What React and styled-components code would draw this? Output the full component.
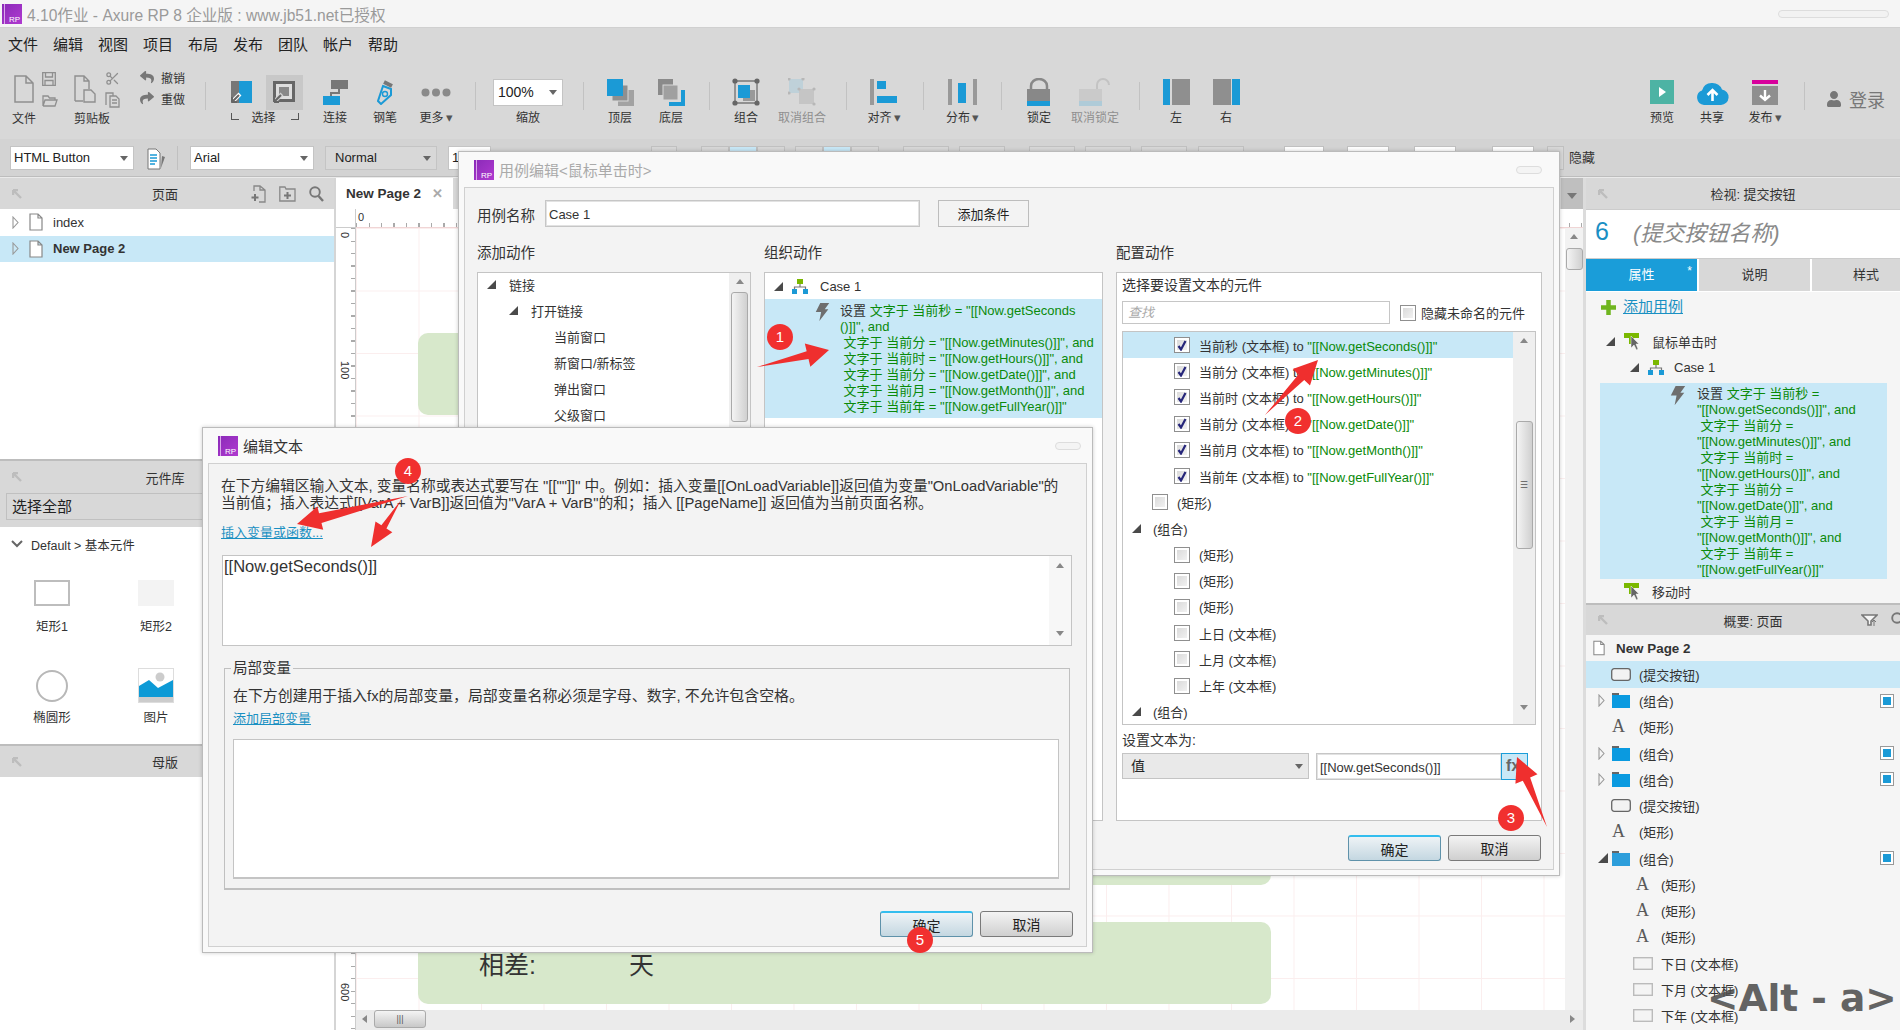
import React from "react";
import styled, { createGlobalStyle } from "styled-components";
import { FaReply, FaShare, FaUser } from "react-icons/fa";
import { Scissors } from "lucide-react";

const sans = '"Liberation Sans","Noto Sans CJK SC",sans-serif';
const BLUE = "#1b9ad6";

const Global = createGlobalStyle`
  html, body { margin: 0; padding: 0; width: 1900px; height: 1030px; overflow: hidden; }
  body { font-family: ${sans}; font-size: 13px; color: #333; background: #fff; }
  * { box-sizing: border-box; }
`;

const Page = styled.div`position: relative; width: 1900px; height: 1030px; overflow: hidden; display: flex; flex-direction: column;`;

const TitleBar = styled.header`height: 28px; background: #f5f5f5; display: flex; align-items: center; padding: 0 11px 0 2px; border-bottom: 1px solid #d0d0d0;`;
const TitleText = styled.span`margin-left: 5px; font-size: 15.6px; color: #9a9a9a; flex: 1;`;
const WinPill = styled.span`width: ${p => p.$w}px; height: ${p => p.$h}px; border: 1px solid #ddd; border-radius: 5px; background: #f2f2f2;`;

const MenuBar = styled.nav`height: 30px; background: #d8d8d8; display: flex; align-items: center; gap: 15px; padding-left: 8px;`;
const MenuItem = styled.span`font-size: 15px; color: #222; width: 30px; white-space: nowrap;`;

const ToolBar = styled.div`height: 81px; background: #d8d8d8; display: flex; align-items: flex-start; padding-top: 17px;`;
const ToolWrap = styled.div`width: ${p => p.$w}px; flex: none; display: flex; flex-direction: column; align-items: center;`;
const ToolIcon = styled.div`height: 34px; display: flex; align-items: center; justify-content: center;`;
const ToolLabel = styled.span`height: 16px; line-height: 16px; margin-top: 1px; font-size: 12px; white-space: nowrap; color: ${p => (p.$dim ? "#8f8f8f" : "#333")};`;
const Caret = styled.i`font-style: normal; font-size: 13px; line-height: 12px; color: #555; margin-left: 2px;`;
const Sep = styled.span`flex: none; width: 1px; height: 28px; margin: 7px 0 0 ${p => p.$ml || 0}px; background: #c2c2c2;`;
const Grow = styled.div`flex: 1;`;
const EndGap = styled.div`flex: 0 0 15px;`;

const FileGroup = styled.div`width: 205px; flex: none; display: flex; padding-left: 12px;`;
const Stack = styled.div`display: flex; flex-direction: column; gap: ${p => p.$gap || 6}px; margin: ${p => p.$m || "0"};`;
const BigFile = styled.div`display: flex; flex-direction: column; align-items: ${p => p.$align || "center"}; width: ${p => p.$w}px; margin-left: ${p => p.$ml || 0}px;`;
const FileLabel = styled.span`margin-top: 6px; font-size: 12px; white-space: nowrap;`;
const UndoRow = styled.div`display: flex; align-items: center; gap: 7px; font-size: 12px; height: 14px; color: #333;`;

const SelectGroup = styled.div`width: 104px; flex: none; display: flex; flex-direction: column; padding-left: 25px;`;
const SelectIcons = styled.div`display: flex; height: 34px; align-items: center; gap: 13px;`;
const SelectHi = styled.div`width: 37px; height: 35px; background: #c8c8c8; display: flex; align-items: center; justify-content: center;`;
const SelectLabel = styled.div`width: 68px; height: 16px; display: flex; justify-content: space-between; margin-top: 1px; font-size: 12px; line-height: 16px;`;
const SelectText = styled.span`margin-left: -3px;`;
const Bracket = styled.i`width: 8px; height: 7px; margin-top: 3px; border-bottom: 1px solid #555; ${p => (p.$r ? "border-right" : "border-left")}: 1px solid #555;`;

const LoginBox = styled.div`margin: 11px 0 0 21px; display: flex; align-items: center; gap: 7px; font-size: 18px; color: #777;`;
const ZoomBox = styled.div`
  width: 70px; height: 27px; background: #fff; border: 1px solid #c4c4c4; font-size: 14px; line-height: 25px; padding-left: 4px; position: relative; color: #222;
  &::after { content: ""; position: absolute; right: 5px; top: 10px; border: 4.5px solid transparent; border-top: 5px solid #666; }
`;

const FormatBar = styled.div`height: 38px; background: #d3d3d3; display: flex; align-items: flex-start; padding: 7px 0 0 10px; border-bottom: 1px solid #bdbdbd;`;
const SelectBox = styled.div`
  flex: none; width: ${p => p.$w}px; height: 24px; margin-left: ${p => p.$ml || 0}px; background: ${p => p.$bg || "#fff"};
  border: 1px solid #c4c4c4; font-size: 13px; line-height: 22px; padding-left: ${p => p.$pl || 3}px; position: relative; color: #222;
  &::after { content: ""; position: absolute; right: 5px; top: 9px; border: 4.5px solid transparent; border-top: 5px solid #666; }
`;
const Peek = styled.span`flex: none; width: ${p => p.$w}px; height: 24px; margin-left: ${p => p.$ml}px; background: ${p => p.$bg || "#d8d8d8"}; border: 1px solid #c0c0c0;`;
const PeekLabel = styled.span`margin-left: 5px; font-size: 13px; line-height: 24px; color: #333; white-space: nowrap;`;
const FmtIcon = styled.span`margin: 2px 0 0 13px;`;
const FmtSep = styled.span`width: 1px; height: 24px; background: #c0c0c0; margin: 0 12px 0 11px;`;

const Workspace = styled.div`flex: 1; display: flex; min-height: 0; border-top: 1px solid #eaeaea;`;

const LeftPanel = styled.aside`flex: none; display: flex; flex-direction: column; background: #fff; border-right: 2px solid #d5d5d5; width: 336px;`;
const PanelHead = styled.div`
  height: ${p => p.$h || 31}px; flex: none; background: #d8d8d8; display: flex; align-items: center; padding: 0 10px 0 12px; position: relative; font-size: 13px;
`;
const HeadTitle = styled.span`position: absolute; left: 0; right: ${p => p.$r || 4}px; text-align: center; pointer-events: none;`;
const HeadIcons = styled.div`margin-left: auto; display: flex; gap: 13px; align-items: center; margin-right: ${p => p.$mr || 0}px;`;
const PageRow = styled.div`
  height: 26.5px; display: flex; align-items: center; padding-left: 12px; gap: 10px; font-size: 13px; color: #333;
  background: ${p => (p.$on ? "#c8e8f7" : "transparent")}; font-weight: ${p => (p.$on ? 700 : 400)};
`;
const PagesBody = styled.div`height: 252px; flex: none; border-bottom: 2px solid #bdbdbd;`;
const LibFilter = styled.div`background: #d8d8d8; padding: 0 0 8px 6px; height: 34px; flex: none;`;
const LibFilterBox = styled.div`height: 27px; border: 1px solid #c0c0c0; border-right: none; padding-left: 5px; line-height: 25px; font-size: 15px; color: #222;`;
const LibGroup = styled.div`height: 34px; display: flex; align-items: center; padding-left: 11px; gap: 8px; font-size: 12.5px;`;
const LibGrid = styled.div`display: grid; grid-template-columns: 104px 104px; grid-template-rows: 54px 58px; row-gap: 34px; padding: 19px 0 0 0; height: 185px; flex: none; border-bottom: 2px solid #bdbdbd;`;
const Widget = styled.div`display: flex; flex-direction: column; align-items: center; gap: ${p => p.$gap}px; font-size: 12.5px; line-height: 14px;`;
const RectW = styled.div`width: 36px; height: 26px; border: 2px solid ${p => (p.$fill ? "#f3f3f3" : "#bdbdbd")}; background: ${p => (p.$fill ? "#f3f3f3" : "#fff")};`;
const CircleW = styled.div`width: 32px; height: 32px; margin: 2px 0 1px; border-radius: 50%; border: 2px solid #b8b8b8;`;

const CanvasPane = styled.main`flex: 1; min-width: 0; display: flex; flex-direction: column; border-right: 3px solid #dcdcdc;`;
const TabRow = styled.div`height: 31px; flex: none; background: #d8d8d8; display: flex;`;
const Tab = styled.div`width: 117px; background: #fff; display: flex; align-items: center; padding-left: 10px; font-weight: 700; font-size: 13.5px; color: #333; gap: 11px;`;
const TabClose = styled.span`color: #aaa; font-size: 13px; font-weight: 700;`;
const TabScroll = styled.div`margin-left: auto; width: 22px; background: #bfbfbf; position: relative; &::after { content: ""; position: absolute; left: 6px; top: 15px; border: 5px solid transparent; border-top: 6px solid #777; }`;
const CanvasGrid = styled.div`flex: 1; min-height: 0; display: grid; grid-template-columns: 20px 1fr 18px; grid-template-rows: 19px 1fr 20px;`;
const RulerCorner = styled.div`background: #fff; border-right: 1px solid #ccc; border-bottom: 1px solid #ccc;`;
const RulerH = styled.div`
  position: relative; background: #fff; border-bottom: 1px solid #f0d5d5; grid-column: 2 / 4;
  background-image: repeating-linear-gradient(90deg, #aaa 0 1px, transparent 1px 12.5px);
  background-size: 100% 4px; background-position: 0 bottom; background-repeat: no-repeat;
`;
const RulerV = styled.div`
  position: relative; background: #fff; border-right: 1px solid #ccc;
  background-image: repeating-linear-gradient(180deg, #aaa 0 1px, transparent 1px 12.5px);
  background-size: 4px 100%; background-position: right 0; background-repeat: no-repeat; grid-row: 2 / 4;
`;
const RulerNum = styled.span`position: absolute; left: 2px; top: 2px; font-size: 11px; color: #333;`;
const RulerNumV = styled.span`position: absolute; left: 3px; top: ${p => p.$y}px; font-size: 11px; writing-mode: vertical-rl; color: #333;`;
const Canvas = styled.div`
  position: relative; overflow: hidden; background-color: #fff;
  background-image: linear-gradient(90deg, #fbeeee 1px, transparent 1px), linear-gradient(180deg, #fbeeee 1px, transparent 1px);
  background-size: 62.5px 62.5px;
`;
const GreenBox = styled.div`position: absolute; left: 62px; width: 853px; top: ${p => p.$top}px; height: ${p => p.$h}px; background: #d7e8cb; border-radius: 10px;`;
const GreenText = styled.span`position: absolute; left: ${p => p.$x}px; top: 26px; font-size: 25px; line-height: 34px; color: #333;`;
const VScroll = styled.div`grid-row: 2; grid-column: 3; background: #f2f2f2; display: flex; flex-direction: column; align-items: center; padding-top: 6px; gap: 9px;`;
const ArrowUp = styled.i`width: 0; height: 0; border: 4px solid transparent; border-bottom: 5px solid #888; border-top: none;`;
const ArrowDown = styled.i`width: 0; height: 0; border: 4px solid transparent; border-top: 5px solid #888; border-bottom: none;`;
const ArrowLeft = styled.i`width: 0; height: 0; border: 4px solid transparent; border-right: 5px solid #888; border-left: none;`;
const ArrowRight = styled.i`width: 0; height: 0; border: 4px solid transparent; border-left: 5px solid #888; border-right: none;`;
const Thumb = styled.div`
  width: ${p => p.$w}px; height: ${p => p.$h}px; flex: none; border: 1px solid #aaa; border-radius: 3px;
  background: ${p => (p.$horiz ? "linear-gradient(180deg,#f4f4f4,#c8c8c8)" : "linear-gradient(90deg,#f4f4f4,#d0d0d0)")};
  display: flex; align-items: center; justify-content: center; font-size: 9px; color: #555;
`;
const HScroll = styled.div`background: #ebebeb; display: flex; align-items: center; padding: 0 8px 2px 6px; gap: 7px; grid-column: 2 / 4;`;

const RightPanel = styled.aside`width: 314px; flex: none; background: #f5f5f5; display: flex; flex-direction: column; overflow: hidden;`;
const NameRow = styled.div`height: 50px; flex: none; background: #fff; display: flex; align-items: center; padding: 0 0 6px 9px; border-top: 1px solid #ccc; border-bottom: 1px solid #ccc;`;
const NameNum = styled.span`font-size: 25px; color: #1a8fc4; width: 38px;`;
const NamePh = styled.span`font-size: 22px; font-style: italic; color: #8a8a8a;`;
const Tabs = styled.div`height: 33px; flex: none; display: flex; gap: 2px; background: #fff;`;
const TabBtn = styled.div`
  width: ${p => p.$w}px; flex: none; height: 32px; line-height: 32px; text-align: center; font-size: 13px; position: relative;
  background: ${p => (p.$on ? "#1a9dd9" : "#d8d8d8")}; color: ${p => (p.$on ? "#fff" : "#333")};
`;
const Star = styled.i`position: absolute; right: 5px; top: -4px; font-style: normal; font-size: 12px; color: #fff;`;
const AddCase = styled.div`height: 36px; flex: none; display: flex; align-items: center; padding: 0 0 6px 15px; gap: 7px;`;
const LinkText = styled.a`color: #1a90c2; text-decoration: underline; font-size: ${p => p.$s || 13}px; line-height: 16px; display: block; white-space: nowrap; margin-top: ${p => p.$mt || 0}px;`;
const TreeRow = styled.div`height: ${p => p.$h || 26}px; flex: none; display: flex; align-items: center; padding-left: ${p => p.$pl}px; font-size: 13px; color: #333;`;
const TriBox = styled.span`width: ${p => p.$w || 18}px; flex: none; display: flex; align-items: center;`;
const IconBox = styled.span`width: ${p => p.$w}px; flex: none; display: flex; align-items: center;`;
const ActionBlock = styled.div`
  margin: ${p => p.$m}; background: #c8e8f7; display: flex; align-items: flex-start; padding: ${p => p.$pad}; flex: none;
`;
const ActionLines = styled.div`margin-left: ${p => p.$ml}px; font-size: 13px; line-height: 16px; color: #0a8a0a; white-space: pre;`;
const Dark = styled.span`color: #333;`;
const OverviewHead = styled(PanelHead)`border-top: 2px solid #bdbdbd; height: 32px;`;
const OvRow = styled.div`
  height: 26.25px; flex: none; display: flex; align-items: center; padding-left: ${p => p.$pl}px; font-size: ${p => (p.$b ? 13.4 : 13)}px; color: #333; position: relative;
  background: ${p => (p.$on ? "#c8e8f7" : "transparent")}; font-weight: ${p => (p.$b ? 700 : 400)};
`;
const OvBadge = styled.span`margin-left: auto; margin-right: 6px; width: 14px; height: 14px; border: 1px solid #999; background: #fff; display: flex; align-items: center; justify-content: center; &::after { content: ""; width: 8px; height: 8px; background: ${BLUE}; }`;
const AIcon = styled.span`font-family: "Liberation Serif", serif; font-size: 18px; color: #5a5a5a; width: ${p => p.$w}px; flex: none;`;

const Dialog = styled.section`
  position: absolute; left: ${p => p.$x}px; top: ${p => p.$y}px; width: ${p => p.$w}px; height: ${p => p.$h}px;
  background: #f9f9f9; border: 1px solid #bbb; box-shadow: 0 0 4px rgba(0,0,0,.2); display: flex; flex-direction: column; padding: 0 5px 5px;
`;
const DlgTitle = styled.div`height: 35px; flex: none; display: flex; align-items: center; padding-left: 10px; gap: 5px; font-size: 15px; color: ${p => (p.$dim ? "#aaa" : "#333")};`;
const DlgPill = styled.span`margin-left: auto; margin-right: ${p => p.$mr}px; width: 26px; height: 8px; border: 1px solid #ddd; border-radius: 4px; background: #f4f4f4;`;
const DlgBody = styled.div`flex: 1; min-height: 0; background: #f3f3f3; border: 1px solid #d0d0d0; display: flex; flex-direction: column; padding: ${p => p.$pad};`;

const NameBar = styled.div`display: flex; align-items: center; height: 27px; font-size: 14.5px; flex: none;`;
const NameLabel = styled.label`width: 68px; flex: none; white-space: nowrap; padding-top: 2px;`;
const TextBox = styled.div`
  width: ${p => p.$w}px; height: ${p => p.$h || 27}px; flex: none; background: #fff; border: 1px solid #c6c6c6; box-shadow: inset 0 0 0 1px #e2e2e2;
  font-size: 13px; line-height: ${p => (p.$h || 27)}px; padding-left: 3px; color: #333;
`;
const FlatBtn = styled.button`
  width: 91px; height: 27px; margin-left: 18px; background: #f3f3f3; border: 1px solid #bdbdbd; font-family: ${sans}; font-size: 13px; color: #222; padding: 0;
`;
const Columns = styled.div`display: grid; grid-template-columns: 274px 339px 426px; column-gap: 13px; margin-top: 17px; flex: 1; min-height: 0;`;
const Column = styled.div`display: flex; flex-direction: column; min-height: 0;`;
const ColTitle = styled.div`font-size: 14.5px; height: 19px; line-height: 19px; margin-bottom: 9px; flex: none;`;
const ColBox = styled.div`flex: 1; min-height: 0; background: #fff; border: 1px solid #c4c4c4; display: flex; position: relative; overflow: hidden;`;
const ColList = styled.div`flex: 1; min-width: 0; display: flex; flex-direction: column; margin-top: ${p => p.$mt || 0}px;`;
const ScrollTrack = styled.div`width: ${p => p.$w || 21}px; flex: none; background: #efefef; display: flex; flex-direction: column; align-items: center; padding-top: 6px; gap: ${p => p.$gap || 8}px;`;
const ActionPad = styled.div`flex: 1; display: flex; flex-direction: column; padding: 0 5px 0;`;
const PickTitle = styled.div`font-size: 14px; color: #333; line-height: 16px; margin-top: 4px; white-space: nowrap;`;
const SearchRow = styled.div`display: flex; align-items: center; margin-top: 8px; flex: none;`;
const SearchBox = styled.div`width: 268px; height: 23px; background: #fff; border: 1px solid #c6c6c6; font-size: 13px; font-style: italic; color: #aaa; line-height: 21px; padding-left: 5px;`;
const Check = styled.span`
  width: 16px; height: 16px; flex: none; border: 1px solid #8f8f8f; background: linear-gradient(135deg,#d6d6d6,#f6f6f6);
  box-shadow: inset 0 0 0 2px #fff; display: flex; align-items: center; justify-content: center;
`;
const SearchCheck = styled.span`margin-left: 10px; display: flex; align-items: center; gap: 5px; font-size: 13px; white-space: nowrap;`;
const TargetBox = styled.div`height: 394px; margin-top: 7px; flex: none; background: #fff; border: 1px solid #c4c4c4; display: flex; overflow: hidden;`;
const TargetRow = styled.div`
  height: 26.2px; flex: none; display: flex; align-items: center; padding-left: ${p => p.$pl}px; font-size: 13px; gap: ${p => p.$gap || 9}px; white-space: nowrap;
  background: ${p => (p.$on ? "#c8e8f7" : "transparent")}; color: #333;
`;
const Green = styled.span`color: #0a8a0a;`;
const ValLabel = styled.div`font-size: 14px; margin-top: 7px; line-height: 16px; flex: none;`;
const ValRow = styled.div`display: flex; margin-top: 5px; flex: none;`;
const ValSelect = styled(SelectBox)`height: 26px; background: #e9e9e9; font-size: 14px; line-height: 24px; padding-left: 8px; &::after { top: 10px; }`;
const ValInput = styled(TextBox)`margin-left: 7px; height: 27px; line-height: 27px; border-right: none;`;
const FxBtn = styled.div`width: 27px; height: 27px; background: #c8e8f7; border: 1px solid #1a9dd9; color: #666; font-weight: 700; font-size: 16px; line-height: 24px; padding-left: 4px;`;
const BtnRow = styled.div`display: flex; justify-content: flex-end; gap: 7px; margin-top: ${p => p.$mt}px; flex: none;`;
const DlgBtn = styled.button`
  width: 93px; height: 26px; border-radius: 3px; padding: 0; font-family: ${sans}; font-size: 14px; color: #222;
  border: 1px solid ${p => (p.$primary ? "#5f92aa" : "#7a7a7a")}; ${p => (p.$primary ? "border-top: 2px solid #33bdee;" : "")}
  background: ${p => (p.$primary ? "linear-gradient(180deg,#eef3f6,#c4d7e1)" : "linear-gradient(180deg,#f3f3f3,#cfcfcf)")};
`;

const HelpText = styled.p`margin: 0; font-size: 14.75px; line-height: 17px; color: #333; white-space: nowrap;`;
const HelpLink = styled.div`margin-top: 13px; height: 16px;`;
const EditArea = styled.div`width: 850px; height: 91px; margin: 14px 0 0 1px; background: #fff; border: 1px solid #c4c4c4; display: flex; flex: none;`;
const EditText = styled.div`flex: 1; font-size: 16.5px; line-height: 20px; padding: 0 1px; color: #333;`;
const EditScroll = styled.div`width: 22px; background: #f7f7f7; display: flex; flex-direction: column; align-items: center; justify-content: space-between; padding: 7px 0 9px;`;
const GroupBox = styled.fieldset`margin: 13px 0 0 3px; padding: 11px 9px 9px 8px; width: 846px; height: 231px; flex: none; border: 1px solid #c0c0c0; border-width: 1px 1px 2px 1px; min-width: 0;`;
const GroupLegend = styled.legend`padding: 0 2px; margin-left: -2px; font-size: 14.5px; height: 18px; line-height: 18px; color: #333;`;
const GroupNote = styled.div`font-size: 14.9px; color: #333; line-height: 16px; white-space: nowrap;`;
const VarBox = styled.div`width: 826px; height: 140px; margin-top: 12px; background: #fff; border: 1px solid #c4c4c4; border-bottom: 2px solid #c4c4c4;`;

const Overlay = styled.svg`position: absolute; left: 0; top: 0; width: 1900px; height: 1030px; pointer-events: none;`;
const Marker = styled.span`
  position: absolute; left: ${p => p.$x - 13}px; top: ${p => p.$y - 13}px; width: 26px; height: 26px; border-radius: 50%; background: #f1302f;
  color: #fff; font-size: 15px; line-height: 26px; text-align: center; font-family: "Liberation Sans", sans-serif;
`;
const AltHint = styled.div`position: absolute; left: 1707px; top: 974px; font-family: "DejaVu Sans", sans-serif; font-weight: 700; font-size: 37.5px; line-height: 48px; color: #4a4a4a; opacity: .85; white-space: nowrap;`;

/* ---------- drawn icons ---------- */
const Logo = ({ s = 20 }) => (
  <svg width={s} height={s} viewBox="0 0 20 20">
    <defs><linearGradient id="lg" x1="0" y1="0" x2="1" y2="1"><stop offset="0" stopColor="#8a2ab8" /><stop offset="1" stopColor="#b03ad0" /></linearGradient></defs>
    <rect width="20" height="20" fill="url(#lg)" />
    <rect x="2" width="1" height="20" fill="#d9a6ea" />
    <text x="7" y="18" fontSize="8" fill="#fff" fontFamily="Liberation Sans">RP</text>
  </svg>
);
const PageIcon = ({ w = 14, h = 18 }) => (
  <svg width={w} height={h} viewBox="0 0 14 18"><path d="M1 1H9L13 5V17H1Z M9 1V5H13" fill="#fff" stroke="#888" strokeWidth="1.2" /></svg>
);
const TriDown = ({ s = 9 }) => <svg width={s} height={s} viewBox="0 0 9 9"><polygon points="0,9 9,9 9,0" fill="#4a4a4a" /></svg>;
const TriRight = () => <svg width="7" height="13" viewBox="0 0 7 13"><polygon points="1,1 6,6.5 1,12" fill="none" stroke="#999" strokeWidth="1.1" /></svg>;
const Collapse = () => <svg width="10" height="10" viewBox="0 0 10 10"><path d="M1 1H6M1 1V6M1 1L9 9" stroke="#bdbdbd" strokeWidth="2.4" fill="none" /></svg>;
const Bolt = ({ s = 18 }) => <svg width={s} height={s * 1.2} viewBox="0 0 15 20"><polygon points="5,0 15,0 10,7 14,7 4,20 6,10 0,10" fill="#6e6e6e" /></svg>;
const CaseIcon = () => (
  <svg width="16" height="15" viewBox="0 0 16 15">
    <rect x="5" y="0" width="6" height="5" fill="#7ab800" />
    <path d="M8 5V8M2.5 10V8H13.5V10" stroke="#777" strokeWidth="1.2" fill="none" />
    <rect x="0" y="10" width="5" height="5" fill={BLUE} /><rect x="11" y="10" width="5" height="5" fill={BLUE} />
  </svg>
);
const ClickIcon = () => (
  <svg width="16" height="17" viewBox="0 0 16 17">
    <rect x="0" y="0" width="15" height="5" fill="#7ab800" /><rect x="5" y="0" width="5" height="11" fill="#7ab800" />
    <path d="M7 3V15L10 12L12.5 17L14 16L12 11H15Z" fill="#666" stroke="#fff" strokeWidth=".5" />
  </svg>
);
const Cursor = () => <path d="M8 14L1 21M1 21V16M1 21H6" stroke="#666" strokeWidth="2" fill="none" />;
const I = {
  New: () => <svg width="20" height="28" viewBox="0 0 20 28"><path d="M1 1H12L19 8V27H1Z M12 1V8H19" fill="none" stroke="#8f8f8f" strokeWidth="1.5" /></svg>,
  Save: () => <svg width="14" height="14" viewBox="0 0 14 14"><path d="M.7.7H13.3V13.3H.7Z M3.5.7V5H10.5V.7 M3 13V8.5H11V13" fill="none" stroke="#8f8f8f" strokeWidth="1.3" /></svg>,
  Open: () => <svg width="16" height="12" viewBox="0 0 16 12"><path d="M1 11V1H6L7.5 3H13V5 M1 11H13L15 5H3L1 11" fill="none" stroke="#8f8f8f" strokeWidth="1.3" /></svg>,
  Paste: () => <svg width="22" height="28" viewBox="0 0 22 28"><path d="M1 26V1H10L15 6V14 M10 1V6H15 M1 26H9 M10 15H17L21 19V27H10Z" fill="none" stroke="#8f8f8f" strokeWidth="1.4" /></svg>,
  Copy: () => <svg width="15" height="16" viewBox="0 0 15 16"><path d="M1 13V1H8V4 M5 4H11L14 7V15H5Z M7 8H12M7 11H12" fill="none" stroke="#8f8f8f" strokeWidth="1.3" /></svg>,
  Sel1: () => <svg width="22" height="23" viewBox="0 0 22 23"><rect width="8" height="22" fill="#777" /><rect x="8" width="13" height="22" fill={BLUE} /><path d="M9 13L2 20" stroke="#fff" strokeWidth="4" /><Cursor /></svg>,
  Sel2: () => <svg width="23" height="23" viewBox="0 0 23 23"><rect x="1.5" y="1.5" width="19" height="18" fill="#dedede" stroke="#666" strokeWidth="3" /><rect x="6" y="6" width="10" height="9" fill="#888" /><path d="M9 13L2 20" stroke="#d0d0d0" strokeWidth="4" /><Cursor /></svg>,
  Conn: () => <svg width="25" height="25" viewBox="0 0 25 25"><rect x="8" width="17" height="9" fill="#777" /><rect y="16" width="17" height="9" fill={BLUE} /><path d="M16 9V13H8V16" stroke="#777" strokeWidth="2" fill="none" /></svg>,
  Pen: () => <svg width="17" height="25" viewBox="0 0 17 25"><path d="M6 6L14 9L14 15L4 24L1 21Z" fill="none" stroke={BLUE} strokeWidth="2" /><circle cx="8" cy="14" r="2.5" fill="none" stroke={BLUE} strokeWidth="1.4" /><path d="M7 2L15 6" stroke="#777" strokeWidth="4" /></svg>,
  More: () => <svg width="30" height="9" viewBox="0 0 30 9"><circle cx="4.5" cy="4.5" r="4" fill="#8a8a8a" /><circle cx="15" cy="4.5" r="4" fill="#8a8a8a" /><circle cx="25.5" cy="4.5" r="4" fill="#8a8a8a" /></svg>,
  Top: () => <svg width="27" height="27" viewBox="0 0 27 27"><rect x="11" y="11" width="16" height="16" fill="#a2a2a2" /><rect x="5" y="6" width="16" height="16" fill="#8f8f8f" stroke="#d8d8d8" /><rect width="16" height="17" fill={BLUE} /></svg>,
  Bottom: () => <svg width="27" height="27" viewBox="0 0 27 27"><rect x="0" y="0" width="15" height="16" fill="#8a8a8a" /><rect x="5" y="6" width="15" height="15" fill="#a0a0a0" stroke="#d8d8d8" /><path d="M11 25H25V11" fill="none" stroke={BLUE} strokeWidth="4" /></svg>,
  Group: () => <svg width="28" height="28" viewBox="0 0 28 28"><path d="M3 3H25V25H3Z" fill="none" stroke="#777" strokeWidth="1.4" /><rect x="11" y="12" width="12" height="11" fill="#999" /><rect x="6" y="7" width="12" height="13" fill={BLUE} />{[[3, 3], [25, 3], [3, 25], [25, 25]].map(([x, y]) => <circle key={x * 100 + y} cx={x} cy={y} r="2.6" fill="#666" />)}</svg>,
  Ungroup: () => <svg width="28" height="28" viewBox="0 0 28 28" opacity=".4"><rect x="1" y="1" width="14" height="14" fill="#9cc8dc" /><rect x="11" y="11" width="15" height="15" fill="#aaa" />{[[1, 1], [15, 1], [1, 15], [11, 11], [26, 11], [26, 26]].map(([x, y]) => <circle key={x * 100 + y} cx={x} cy={y} r="1.6" fill="#888" />)}</svg>,
  Align: () => <svg width="28" height="26" viewBox="0 0 28 26"><rect width="4" height="26" fill="#999" /><rect x="7" y="2" width="9" height="8" fill={BLUE} /><rect x="7" y="17" width="20" height="7" fill={BLUE} /></svg>,
  Dist: () => <svg width="29" height="26" viewBox="0 0 29 26"><rect width="4" height="26" fill="#999" /><rect x="25" width="4" height="26" fill="#999" /><rect x="10" y="4" width="8" height="20" fill={BLUE} /></svg>,
  Lock: () => <svg width="24" height="28" viewBox="0 0 24 28"><path d="M4 11V8A8 7 0 0 1 20 8V11" fill="none" stroke="#888" strokeWidth="2.5" /><rect y="11" width="23" height="12" fill="#888" /><rect y="23" width="23" height="5" fill={BLUE} /></svg>,
  Unlock: () => <svg width="32" height="28" viewBox="0 0 32 28" opacity=".45"><path d="M18 11V7A6 6 0 0 1 30 7" fill="none" stroke="#aaa" strokeWidth="2" /><rect y="11" width="23" height="12" fill="#bbb" /><rect y="23" width="23" height="5" fill="#7ebcd9" /></svg>,
  Left: () => <svg width="27" height="26" viewBox="0 0 27 26"><rect width="7" height="26" fill={BLUE} /><rect x="9" width="18" height="26" fill="#8f8f8f" /></svg>,
  Right: () => <svg width="27" height="26" viewBox="0 0 27 26"><rect width="18" height="26" fill="#8f8f8f" /><rect x="19" width="8" height="26" fill={BLUE} /></svg>,
  Preview: () => <svg width="24" height="24" viewBox="0 0 24 24"><rect width="24" height="24" fill="#4db3a4" /><polygon points="9,7 16,12 9,17" fill="#fff" /></svg>,
  Share: () => <svg width="33" height="25" viewBox="0 0 33 25"><path d="M8 25A7.5 7.5 0 0 1 6 10.5A10.5 10 0 0 1 26 9.5A7.8 7.8 0 0 1 25 25Z" fill={BLUE} /><path d="M16.5 21V10M11.5 15L16.5 10L21.5 15" stroke="#fff" strokeWidth="2.6" fill="none" /></svg>,
  Publish: () => <svg width="26" height="25" viewBox="0 0 26 25"><rect width="26" height="4" fill="#d8009c" /><rect y="6" width="26" height="19" fill="#8f8f8f" /><path d="M13 10V20M8 15.5L13 20L18 15.5" stroke="#fff" strokeWidth="2.4" fill="none" /></svg>,
  Doc: () => <svg width="19" height="22" viewBox="0 0 19 22"><path d="M1 1H9L13 5V21H1Z" fill="#fff" stroke="#777" /><path d="M3 7H10M3 10H10M3 13H10M3 16H8" stroke={BLUE} strokeWidth="1.3" /><path d="M15 8L18 9L14 20Z" fill="#777" /></svg>,
  AddPage: () => <svg width="15" height="18" viewBox="0 0 15 18"><path d="M3 6V1H9L14 5V17H8 M9 1V5H14" fill="none" stroke="#888" strokeWidth="1.3" /><path d="M4 9V16M.5 12.5H7.5" stroke="#777" strokeWidth="2" /></svg>,
  AddFolder: () => <svg width="17" height="16" viewBox="0 0 17 16"><path d="M.8 15V1H6L7 3H16V15Z" fill="none" stroke="#888" strokeWidth="1.3" /><path d="M8.5 6V13M5 9.5H12" stroke="#777" strokeWidth="2" /></svg>,
  Search: () => <svg width="15" height="16" viewBox="0 0 15 16"><circle cx="6" cy="6" r="4.8" fill="none" stroke="#777" strokeWidth="1.9" /><path d="M9.5 10L14 15" stroke="#777" strokeWidth="2.4" /></svg>,
  Chev: () => <svg width="12" height="8" viewBox="0 0 12 8"><path d="M1 1L6 6L11 1" fill="none" stroke="#666" strokeWidth="2" /></svg>,
  Img: () => <svg width="36" height="35" viewBox="0 0 36 35"><rect x=".5" y=".5" width="35" height="34" fill="#fff" stroke="#ddd" /><rect x="1" y="29" width="34" height="5" fill="#ccc" /><path d="M1 29V18L11 12L20 20L35 12V29Z" fill="#0d9ad6" /><circle cx="22" cy="9" r="4.5" fill="#ccc" /></svg>,
  Plus: () => <svg width="15" height="15" viewBox="0 0 15 15"><path d="M7.5 0V15M0 7.5H15" stroke="#6fb51f" strokeWidth="4.5" /></svg>,
  Folder: ({ open }) => <svg width="18" height="15" viewBox="0 0 18 15"><path d="M0 0H7V2H0Z" fill="#666" /><path d="M0 2H18V15H0Z" fill={open ? "#2d9edb" : "#0a9ae0"} /></svg>,
  Button: () => <svg width="20" height="13" viewBox="0 0 20 13"><rect x=".7" y=".7" width="18.6" height="11.6" rx="2.5" fill="#f2f2f2" stroke="#666" strokeWidth="1.3" /></svg>,
  Input: () => <svg width="20" height="13" viewBox="0 0 20 13"><rect x=".7" y=".7" width="18.6" height="11.6" fill="#f4f4f4" stroke="#bbb" strokeWidth="1.4" /></svg>,
  Filter: () => <svg width="17" height="13" viewBox="0 0 17 13"><path d="M1 1H16L10 7V11H7V7Z" fill="#f5f5f5" stroke="#777" strokeWidth="1.6" /><path d="M13 12V6M11 8L13 6L15 8" stroke="#777" fill="none" /></svg>,
  Tick: () => <svg width="10" height="11" viewBox="0 0 10 11"><path d="M1.5 6L4 9.5L8.5 1" fill="none" stroke="#26267a" strokeWidth="2.2" /></svg>,
};

const Tool = ({ w, icon, label, dim, caret }) => (
  <ToolWrap $w={w}>
    <ToolIcon>{icon}</ToolIcon>
    <ToolLabel $dim={dim}>{label}{caret && <Caret>▾</Caret>}</ToolLabel>
  </ToolWrap>
);

const Arrow = ({ t, p, hl = 24, hw = 11, neck = 4 }) => {
  const dx = p[0] - t[0], dy = p[1] - t[1], L = Math.hypot(dx, dy);
  const ux = dx / L, uy = dy / L, nx = -uy, ny = ux;
  const bx = p[0] - ux * hl, by = p[1] - uy * hl;
  const pts = [t, [bx + nx * neck, by + ny * neck], [bx + nx * hw, by + ny * hw], p, [bx - nx * hw, by - ny * hw], [bx - nx * neck, by - ny * neck]];
  return <polygon points={pts.map(a => a.join(",")).join(" ")} fill="#ef2f2e" />;
};

const menus = ["文件", "编辑", "视图", "项目", "布局", "发布", "团队", "帐户", "帮助"];
const peeks = [
  [160, 26], [24, 28], [0, 28, "#c8e8f7"], [0, 28], [10, 28], [0, 28, "#c8e8f7"], [0, 28], [24, 46], [10, 46], [24, 46], [10, 46], [10, 46], [11, 46],
  [40, 40, "#fff"], [23, 42, "#fff"], [25, 42, "#fff"], [36, 42, "#fff"], [13, 17],
];
const targets = [
  ["当前秒", "getSeconds"], ["当前分", "getMinutes"], ["当前时", "getHours"], ["当前分", "getDate"], ["当前月", "getMonth"], ["当前年", "getFullYear"],
];
const actionItems = [
  ["当前分", "getMinutes"], ["当前时", "getHours"], ["当前分", "getDate"], ["当前月", "getMonth"], ["当前年", "getFullYear"],
];

const overview = [
  { k: "btn", t: "(提交按钮)", on: true, pl: 25 },
  { k: "folder", t: "(组合)", tri: "r" },
  { k: "a", t: "(矩形)", pl: 26, w: 27 },
  { k: "folder", t: "(组合)", tri: "r" },
  { k: "folder", t: "(组合)", tri: "r" },
  { k: "btn", t: "(提交按钮)", pl: 25 },
  { k: "a", t: "(矩形)", pl: 26, w: 27 },
  { k: "openfolder", t: "(组合)", tri: "d" },
  { k: "a", t: "(矩形)", pl: 50, w: 25 },
  { k: "a", t: "(矩形)", pl: 50, w: 25 },
  { k: "a", t: "(矩形)", pl: 50, w: 25 },
  { k: "input", t: "下日 (文本框)", pl: 47 },
  { k: "input", t: "下月 (文本框)", pl: 47 },
  { k: "input", t: "下年 (文本框)", pl: 47 },
];

const OverviewRow = ({ r }) => {
  const hasFolder = r.k === "folder" || r.k === "openfolder";
  return (
    <OvRow $on={r.on} $pl={hasFolder ? 12 : r.pl}>
      {r.tri && <TriBox $w={14}>{r.tri === "r" ? <TriRight /> : <TriDown s={10} />}</TriBox>}
      {hasFolder && <IconBox $w={27}><I.Folder open={r.k === "openfolder"} /></IconBox>}
      {r.k === "btn" && <IconBox $w={28}><I.Button /></IconBox>}
      {r.k === "input" && <IconBox $w={28}><I.Input /></IconBox>}
      {r.k === "a" && <AIcon $w={r.w}>A</AIcon>}
      {r.t}
      {hasFolder && <OvBadge />}
    </OvRow>
  );
};

const TargetCheckRow = ({ pl, checked, on, children }) => (
  <TargetRow $pl={pl} $on={on}>
    <Check>{checked && <I.Tick />}</Check>
    <span>{children}</span>
  </TargetRow>
);

export default function App() {
  return (
    <Page>
      <Global />
      <TitleBar>
        <Logo />
        <TitleText>4.10作业 - Axure RP 8 企业版 : www.jb51.net已授权</TitleText>
        <WinPill $w={111} $h={8} />
      </TitleBar>
      <MenuBar>{menus.map(m => <MenuItem key={m}>{m}</MenuItem>)}</MenuBar>
      <ToolBar>
        <FileGroup>
          <BigFile $w={24}><I.New /><FileLabel>文件</FileLabel></BigFile>
          <Stack $gap={9} $m="-3px 0 0 6px"><I.Save /><I.Open /></Stack>
          <BigFile $w={36} $ml={16} $align="flex-start"><I.Paste /><FileLabel>剪贴板</FileLabel></BigFile>
          <Stack $gap={6} $m="-4px 0 0 -5px"><Scissors size={15} color="#8f8f8f" strokeWidth={2} /><I.Copy /></Stack>
          <Stack $gap={7} $m="-5px 0 0 20px">
            <UndoRow><FaReply size={14} color="#777" />撤销</UndoRow>
            <UndoRow><FaShare size={14} color="#777" />重做</UndoRow>
          </Stack>
        </FileGroup>
        <Sep />
        <SelectGroup>
          <SelectIcons><I.Sel1 /><SelectHi><I.Sel2 /></SelectHi></SelectIcons>
          <SelectLabel><Bracket /><SelectText>选择</SelectText><Bracket $r /></SelectLabel>
        </SelectGroup>
        <Tool w={50} icon={<I.Conn />} label="连接" />
        <Tool w={50} icon={<I.Pen />} label="钢笔" />
        <Tool w={52} icon={<I.More />} label="更多" caret />
        <Sep $ml={13} />
        <ToolWrap $w={104}>
          <ToolIcon><ZoomBox>100%</ZoomBox></ToolIcon>
          <ToolLabel>缩放</ToolLabel>
        </ToolWrap>
        <Sep $ml={3} />
        <Tool w={72} icon={<I.Top />} label="顶层" />
        <Tool w={30} icon={<I.Bottom />} label="底层" />
        <Sep $ml={23} />
        <Tool w={72} icon={<I.Group />} label="组合" />
        <Tool w={40} icon={<I.Ungroup />} label="取消组合" dim />
        <Sep $ml={24} />
        <Tool w={74} icon={<I.Align />} label="对齐" caret />
        <Sep $ml={2} />
        <Tool w={77} icon={<I.Dist />} label="分布" caret />
        <Sep />
        <Tool w={74} icon={<I.Lock />} label="锁定" />
        <Tool w={38} icon={<I.Unlock />} label="取消锁定" dim />
        <Sep $ml={25} />
        <Tool w={72} icon={<I.Left />} label="左" />
        <Tool w={28} icon={<I.Right />} label="右" />
        <Grow />
        <Tool w={50} icon={<I.Preview />} label="预览" />
        <Tool w={50} icon={<I.Share />} label="共享" />
        <Tool w={56} icon={<I.Publish />} label="发布" caret />
        <Sep $ml={11} />
        <LoginBox><FaUser size={16} color="#777" />登录</LoginBox>
        <EndGap />
      </ToolBar>
      <FormatBar>
        <SelectBox $w={124}>HTML Button</SelectBox>
        <FmtIcon><I.Doc /></FmtIcon>
        <FmtSep />
        <SelectBox $w={124}>Arial</SelectBox>
        <SelectBox $w={112} $ml={11} $bg="#d8d8d8" $pl={9}>Normal</SelectBox>
        <SelectBox $w={43} $ml={11}>1</SelectBox>
        {peeks.map(([ml, w, bg], i) => <Peek key={i} $ml={ml} $w={w} $bg={bg} />)}
        <PeekLabel>隐藏</PeekLabel>
      </FormatBar>
      <Workspace>
        <LeftPanel>
          <PanelHead>
            <Collapse /><HeadTitle>页面</HeadTitle>
            <HeadIcons><I.AddPage /><I.AddFolder /><I.Search /></HeadIcons>
          </PanelHead>
          <PagesBody>
            <PageRow><TriRight /><PageIcon />index</PageRow>
            <PageRow $on><TriRight /><PageIcon />New Page 2</PageRow>
          </PagesBody>
          <PanelHead $h={32}><Collapse /><HeadTitle>元件库</HeadTitle></PanelHead>
          <LibFilter><LibFilterBox>选择全部</LibFilterBox></LibFilter>
          <LibGroup><I.Chev />Default &gt; 基本元件</LibGroup>
          <LibGrid>
            <Widget $gap={14}><RectW />矩形1</Widget>
            <Widget $gap={14}><RectW $fill />矩形2</Widget>
            <Widget $gap={8}><CircleW />椭圆形</Widget>
            <Widget $gap={8}><I.Img />图片</Widget>
          </LibGrid>
          <PanelHead><Collapse /><HeadTitle>母版</HeadTitle></PanelHead>
        </LeftPanel>
        <CanvasPane>
          <TabRow>
            <Tab>New Page 2<TabClose>✕</TabClose></Tab>
            <TabScroll />
          </TabRow>
          <CanvasGrid>
            <RulerCorner />
            <RulerH><RulerNum>0</RulerNum></RulerH>
            <RulerV>
              <RulerNumV $y={4}>0</RulerNumV>
              <RulerNumV $y={133}>100</RulerNumV>
              <RulerNumV $y={755}>600</RulerNumV>
            </RulerV>
            <Canvas>
              <GreenBox $top={105} $h={82} />
              <GreenBox $top={574} $h={83} />
              <GreenBox $top={694} $h={82}>
                <GreenText $x={61}>相差:</GreenText>
                <GreenText $x={211}>天</GreenText>
              </GreenBox>
            </Canvas>
            <VScroll><ArrowUp /><Thumb $w={17} $h={22} /></VScroll>
            <HScroll>
              <ArrowLeft />
              <Thumb $w={52} $h={18} $horiz>|||</Thumb>
              <Grow />
              <ArrowRight />
            </HScroll>
          </CanvasGrid>
        </CanvasPane>
        <RightPanel>
          <PanelHead><Collapse /><HeadTitle $r={-20}>检视: 提交按钮</HeadTitle></PanelHead>
          <NameRow><NameNum>6</NameNum><NamePh>(提交按钮名称)</NamePh></NameRow>
          <Tabs>
            <TabBtn $w={111} $on>属性<Star>*</Star></TabBtn>
            <TabBtn $w={111}>说明</TabBtn>
            <TabBtn $w={108}>样式</TabBtn>
          </Tabs>
          <AddCase><I.Plus /><LinkText $s={15}>添加用例</LinkText></AddCase>
          <TreeRow $pl={20}><TriBox><TriDown /></TriBox><IconBox $w={28}><ClickIcon /></IconBox>鼠标单击时</TreeRow>
          <TreeRow $pl={44}><TriBox><TriDown /></TriBox><IconBox $w={26}><CaseIcon /></IconBox>Case 1</TreeRow>
          <ActionBlock $m="3px 13px 0 14px" $pad="3px 0 1px 70px">
            <Bolt s={16} />
            <ActionLines $ml={11}>
              <Dark>设置 </Dark>文字于 当前秒 ={"\n"}"[[Now.getSeconds()]]", and
              {actionItems.map(([a, b], i) => (
                <React.Fragment key={b}>{"\n"} 文字于 {a} ={"\n"}"[[Now.{b}()]]"{i < 4 ? ", and" : ""}</React.Fragment>
              ))}
            </ActionLines>
          </ActionBlock>
          <TreeRow $pl={38} $h={24}><IconBox $w={28}><ClickIcon /></IconBox>移动时</TreeRow>
          <OverviewHead>
            <Collapse /><HeadTitle $r={-20}>概要: 页面</HeadTitle>
            <HeadIcons $mr={-16}><I.Filter /><I.Search /></HeadIcons>
          </OverviewHead>
          <OvRow $pl={7} $b><IconBox $w={23}><PageIcon w={12} h={16} /></IconBox>New Page 2</OvRow>
          {overview.map((r, i) => <OverviewRow key={i} r={r} />)}
        </RightPanel>
      </Workspace>

      <Dialog $x={458} $y={151} $w={1102} $h={725}>
        <DlgTitle $dim><Logo />用例编辑&lt;鼠标单击时&gt;<DlgPill $mr={12} /></DlgTitle>
        <DlgBody $pad="12px 12px 8px 12px">
          <NameBar>
            <NameLabel>用例名称</NameLabel>
            <TextBox $w={375}>Case 1</TextBox>
            <FlatBtn>添加条件</FlatBtn>
          </NameBar>
          <Columns>
            <Column>
              <ColTitle>添加动作</ColTitle>
              <ColBox>
                <ColList $mt={-2}>
                  <TreeRow $pl={9}><TriBox $w={22}><TriDown /></TriBox>链接</TreeRow>
                  <TreeRow $pl={31}><TriBox $w={22}><TriDown /></TriBox>打开链接</TreeRow>
                  <TreeRow $pl={76}>当前窗口</TreeRow>
                  <TreeRow $pl={76}>新窗口/新标签</TreeRow>
                  <TreeRow $pl={76}>弹出窗口</TreeRow>
                  <TreeRow $pl={76}>父级窗口</TreeRow>
                </ColList>
                <ScrollTrack><ArrowUp /><Thumb $w={17} $h={130} /></ScrollTrack>
              </ColBox>
            </Column>
            <Column>
              <ColTitle>组织动作</ColTitle>
              <ColBox>
                <ColList>
                  <TreeRow $pl={9}><TriBox><TriDown /></TriBox><IconBox $w={28}><CaseIcon /></IconBox>Case 1</TreeRow>
                  <ActionBlock $m="0" $pad="4px 0 3px 50px">
                    <Bolt s={15} />
                    <ActionLines $ml={10}>
                      <Dark>设置 </Dark>文字于 当前秒 = "[[Now.getSeconds{"\n"}()]]", and
                      {actionItems.map(([a, b], i) => (
                        <React.Fragment key={b}>{"\n"} 文字于 {a} = "[[Now.{b}()]]"{i < 4 ? ", and" : ""}</React.Fragment>
                      ))}
                    </ActionLines>
                  </ActionBlock>
                </ColList>
              </ColBox>
            </Column>
            <Column>
              <ColTitle>配置动作</ColTitle>
              <ColBox>
                <ActionPad>
                  <PickTitle>选择要设置文本的元件</PickTitle>
                  <SearchRow>
                    <SearchBox>查找</SearchBox>
                    <SearchCheck><Check />隐藏未命名的元件</SearchCheck>
                  </SearchRow>
                  <TargetBox>
                    <ColList>
                      {targets.map(([a, b], i) => (
                        <TargetCheckRow key={b} pl={51} checked on={i === 0}>
                          {a} (文本框) to <Green>"[[Now.{b}()]]"</Green>
                        </TargetCheckRow>
                      ))}
                      <TargetCheckRow pl={29}>(矩形)</TargetCheckRow>
                      <TargetRow $pl={9} $gap={12}><TriDown />(组合)</TargetRow>
                      <TargetCheckRow pl={51}>(矩形)</TargetCheckRow>
                      <TargetCheckRow pl={51}>(矩形)</TargetCheckRow>
                      <TargetCheckRow pl={51}>(矩形)</TargetCheckRow>
                      <TargetCheckRow pl={51}>上日 (文本框)</TargetCheckRow>
                      <TargetCheckRow pl={51}>上月 (文本框)</TargetCheckRow>
                      <TargetCheckRow pl={51}>上年 (文本框)</TargetCheckRow>
                      <TargetRow $pl={9} $gap={12}><TriDown />(组合)</TargetRow>
                    </ColList>
                    <ScrollTrack $w={22} $gap={78}>
                      <ArrowUp />
                      <Thumb $w={17} $h={128}>☰</Thumb>
                      <Grow />
                      <ArrowDown />
                      <span />
                    </ScrollTrack>
                  </TargetBox>
                  <ValLabel>设置文本为:</ValLabel>
                  <ValRow>
                    <ValSelect $w={187}>值</ValSelect>
                    <ValInput $w={185}>[[Now.getSeconds()]]</ValInput>
                    <FxBtn>fx</FxBtn>
                  </ValRow>
                </ActionPad>
              </ColBox>
            </Column>
          </Columns>
          <BtnRow $mt={14}>
            <DlgBtn $primary>确定</DlgBtn>
            <DlgBtn>取消</DlgBtn>
          </BtnRow>
        </DlgBody>
      </Dialog>

      <Dialog $x={202} $y={427} $w={891} $h={526}>
        <DlgTitle><Logo />编辑文本<DlgPill $mr={6} /></DlgTitle>
        <DlgBody $pad="14px 13px 8px 12px">
          <HelpText>在下方编辑区输入文本, 变量名称或表达式要写在 "[[""]]" 中。例如：插入变量[[OnLoadVariable]]返回值为变量"OnLoadVariable"的</HelpText>
          <HelpText>当前值；插入表达式[[VarA + VarB]]返回值为"VarA + VarB"的和；插入 [[PageName]] 返回值为当前页面名称。</HelpText>
          <HelpLink><LinkText>插入变量或函数...</LinkText></HelpLink>
          <EditArea>
            <EditText>[[Now.getSeconds()]]</EditText>
            <EditScroll><ArrowUp /><ArrowDown /></EditScroll>
          </EditArea>
          <GroupBox>
            <GroupLegend>局部变量</GroupLegend>
            <GroupNote>在下方创建用于插入fx的局部变量，局部变量名称必须是字母、数字, 不允许包含空格。</GroupNote>
            <LinkText $mt={7}>添加局部变量</LinkText>
            <VarBox />
          </GroupBox>
          <BtnRow $mt={21}>
            <DlgBtn $primary>确定</DlgBtn>
            <DlgBtn>取消</DlgBtn>
          </BtnRow>
        </DlgBody>
      </Dialog>

      <Overlay viewBox="0 0 1900 1030">
        <Arrow t={[757, 367]} p={[829, 350]} hl={22} hw={12} />
        <Arrow t={[1265, 415]} p={[1318, 360]} hl={24} hw={12} />
        <Arrow t={[1547, 827]} p={[1517, 757]} hl={24} hw={12} />
        <Arrow t={[408, 496]} p={[297, 524]} hl={24} hw={12} neck={5} />
        <Arrow t={[401, 500]} p={[371, 547]} hl={24} hw={10} neck={3} />
      </Overlay>
      <Marker $x={780} $y={337}>1</Marker>
      <Marker $x={1298} $y={421}>2</Marker>
      <Marker $x={1511} $y={818}>3</Marker>
      <Marker $x={408} $y={471}>4</Marker>
      <Marker $x={920} $y={940}>5</Marker>
      <AltHint>&lt;Alt - a&gt;</AltHint>
    </Page>
  );
}
